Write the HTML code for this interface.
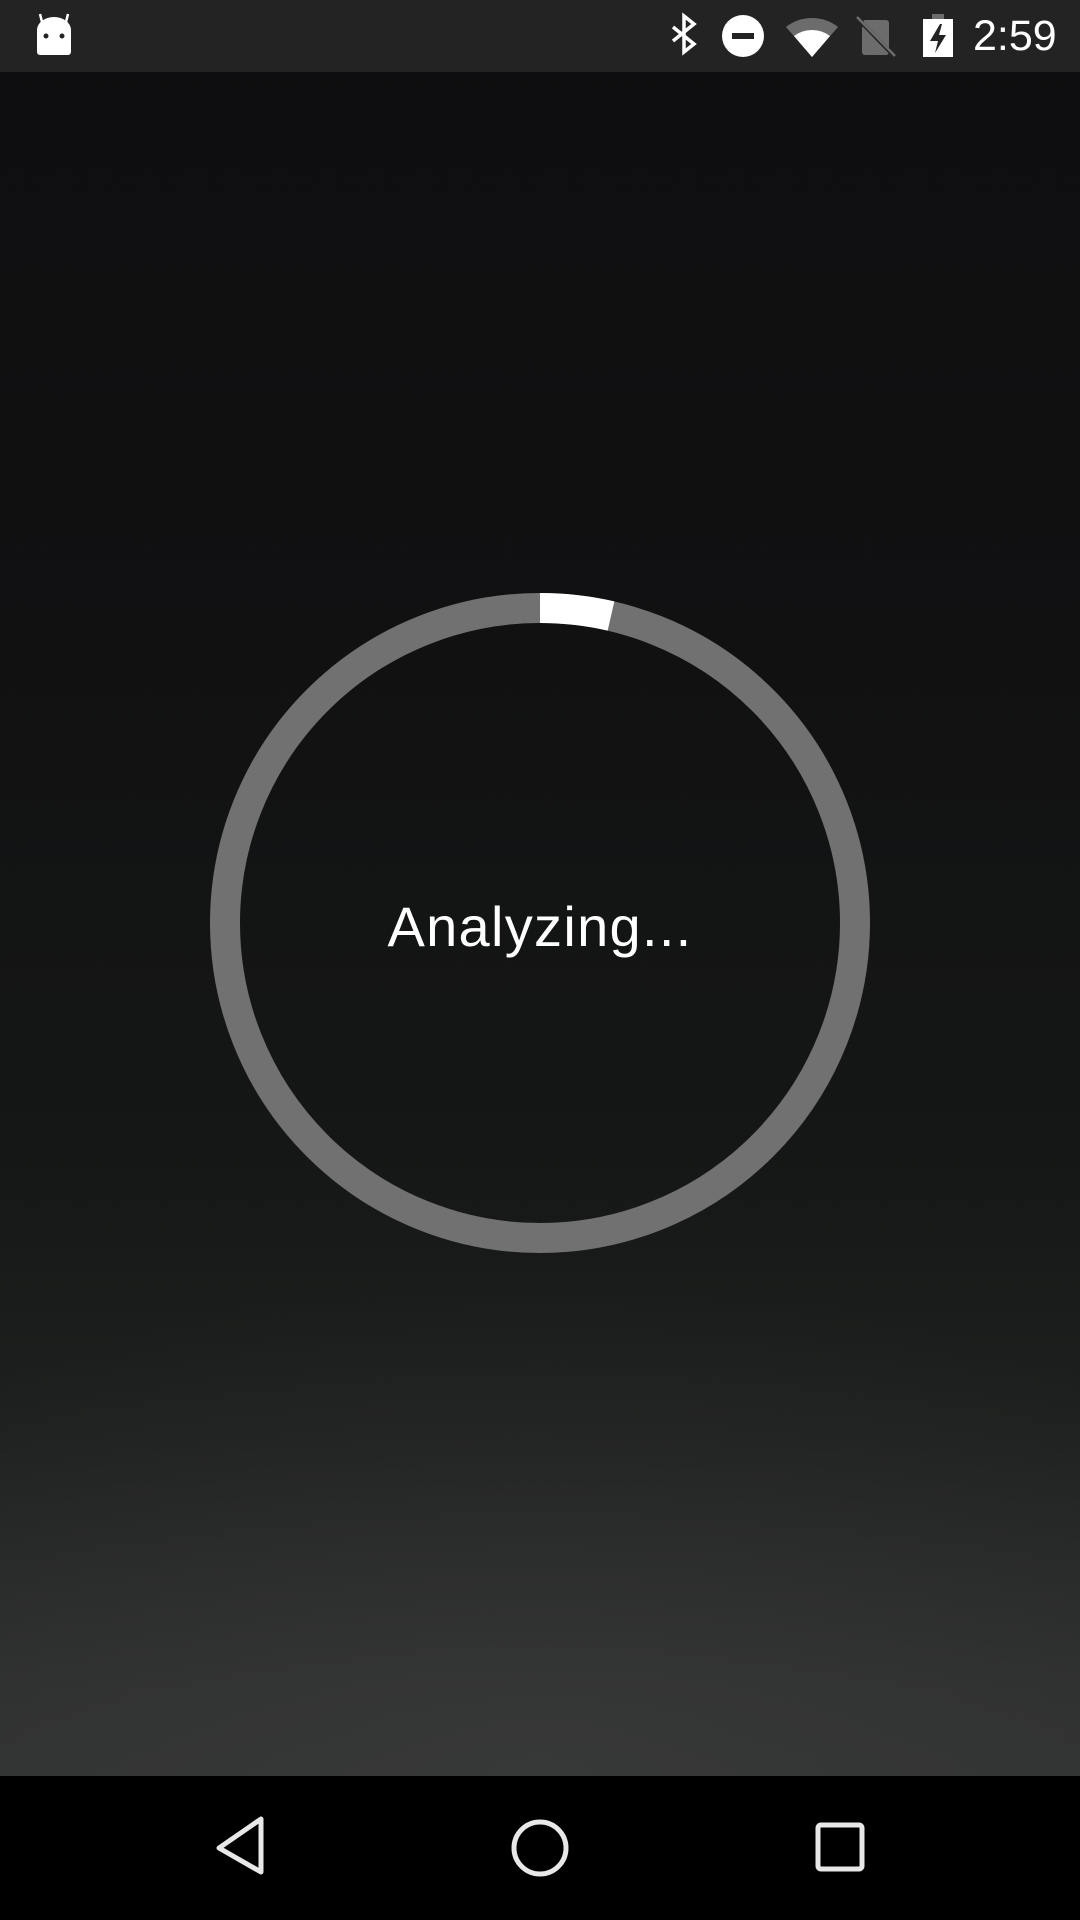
<!DOCTYPE html>
<html><head><meta charset="utf-8"><style>
html,body{margin:0;padding:0;width:1080px;height:1920px;overflow:hidden;font-family:"Liberation Sans",sans-serif}
body{position:relative;background:linear-gradient(180deg,#0e0d0f 0%,#111112 35%,#151716 60%,#1f2120 75%,#2d2f2e 88%,#333434 100%)}
.glow{position:absolute;left:0;top:72px;width:1080px;height:1704px;background:radial-gradient(ellipse 900px 500px at 540px 1704px,rgba(70,70,70,.35),rgba(0,0,0,0))}
.sb{position:absolute;left:0;top:0;width:1080px;height:72px;background:#232323}
.nav{position:absolute;left:0;top:1776px;width:1080px;height:144px;background:#000}
.time{position:absolute;left:973px;top:10px;color:#fff;font-size:43px;line-height:52px}
.txt{position:absolute;left:0;width:1080px;top:892px;text-align:center;color:#fff;font-size:56px;line-height:70px;letter-spacing:1.3px}
</style></head><body>
<div class="glow"></div>
<div class="sb">
<svg width="1080" height="72" style="position:absolute;left:0;top:0">
 <path d="M37 52 V30 a17 13 0 0 1 34 0 V52 a3 3 0 0 1 -3 3 H40 a3 3 0 0 1 -3 -3z" fill="#fff"/>
 <line x1="42" y1="22" x2="40" y2="14" stroke="#fff" stroke-width="2.5"/>
 <line x1="66" y1="22" x2="68" y2="14" stroke="#fff" stroke-width="2.5"/>
 <circle cx="46" cy="36" r="2.5" fill="#232323"/><circle cx="62" cy="36" r="2.5" fill="#232323"/>
 <path d="M673 27 L694 44 L684 52 V16 L694 24 L673 41" fill="none" stroke="#fff" stroke-width="3.5"/>
 <circle cx="743" cy="36" r="21" fill="#fff"/><rect x="732" y="33" width="22" height="6" fill="#232323"/>
 <path d="M786 27 A42 42 0 0 1 838 27 L812 57 Z" fill="#6c6c6c"/>
 <path d="M794 36 A30 30 0 0 1 830 36 L812 57 Z" fill="#fff"/>
 <path d="M864 20 H886 a3 3 0 0 1 3 3 V52 a3 3 0 0 1 -3 3 H865 a3 3 0 0 1 -3 -3 V28 Z" fill="#6c6c6c"/>
 <line x1="858" y1="19" x2="895" y2="57" stroke="#232323" stroke-width="4"/>
 <line x1="857" y1="17" x2="895" y2="56" stroke="#6c6c6c" stroke-width="2.5"/>
 <rect x="932" y="14" width="12" height="5" fill="#6c6c6c"/>
 <rect x="923" y="19" width="30" height="38" fill="#fff"/>
 <path d="M940 24 L930 41 H938 L935 53 L946 35 H939 L942 24Z" fill="#232323"/>
</svg>
<div class="time">2:59</div>
</div>
<svg width="1080" height="1920" style="position:absolute;left:0;top:0">
 <circle cx="540" cy="923" r="315" fill="none" stroke="#717171" stroke-width="30"/>
 <path d="M540 608 A315 315 0 0 1 611 616" fill="none" stroke="#fff" stroke-width="30"/>
</svg>
<div class="txt">Analyzing...</div>
<div class="nav">
<svg width="1080" height="144">
 <path d="M261 43 V96 L219 72 Z" fill="none" stroke="#e8e8e8" stroke-width="5" stroke-linejoin="round"/>
 <circle cx="540" cy="72" r="26" fill="none" stroke="#e8e8e8" stroke-width="5"/>
 <rect x="818" y="49" width="44" height="44" rx="3" fill="none" stroke="#e8e8e8" stroke-width="5"/>
</svg>
</div>
</body></html>
